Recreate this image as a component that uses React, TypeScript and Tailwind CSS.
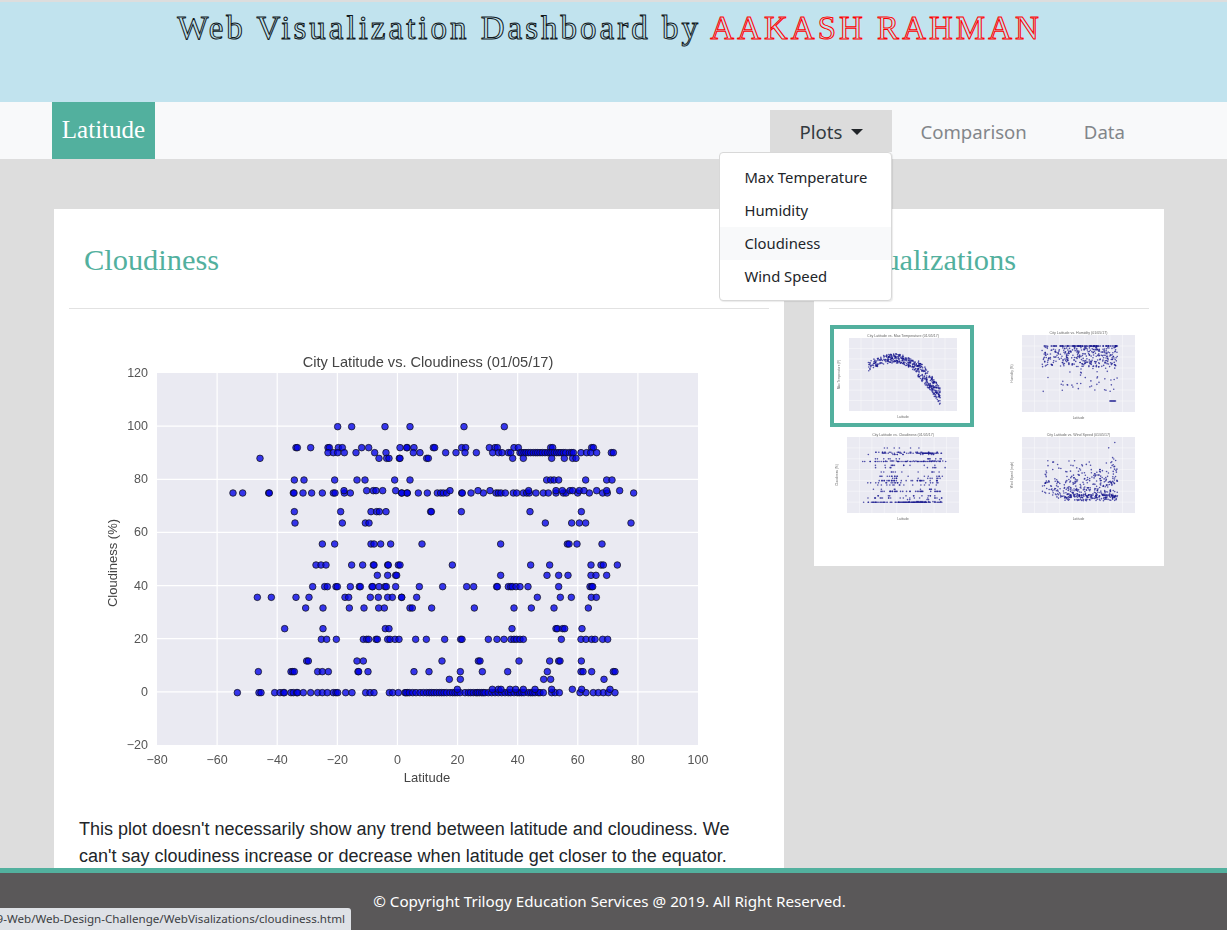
type Row = { y: number; a?: number[]; b?: number[] };

const topRows: Row[] = [
  { y: 245, a: [743, 785, 885, 960], b: [192, 313] },
  { y: 308, a: [618, 622, 662, 714, 718, 745, 757, 815, 836, 930, 952], b: [20, 42, 100, 104, 185, 197, 268, 285, 292, 342, 355, 452, 458, 575, 580] },
  { y: 323, a: [714, 730, 743, 763, 798, 854, 888], b: [40, 60, 137, 168, 195, 229, 278, 296, 306, 325, 332, 360, 365, 372, 378, 385, 392, 400, 407, 413, 420, 427, 435, 443, 450, 456, 463, 470, 477, 483, 490, 497, 508, 515, 520, 543, 560, 572, 590, 634, 640] },
  { y: 340, a: [510, 867, 890, 897, 928], b: [0, 80, 85, 338, 370, 455, 493, 518, 528] },
  { y: 405, a: [613, 642, 734, 801, 825, 914, 960], b: [440, 452, 462, 476, 557, 620, 636] },
  { y: 444, a: [429, 458, 536, 538, 610, 612, 639, 665, 697, 730, 735, 763, 781, 935, 951], b: [5, 22, 55, 82, 112, 122, 130, 140, 185, 187, 213, 250, 288, 295, 303, 316, 340, 350, 370, 380, 388, 408, 430, 445, 468, 490, 498, 533, 568, 608, 622, 701] },
  { y: 437, a: [762, 830, 850, 858, 878, 917], b: [150, 234, 270, 386, 468, 487, 510, 518, 538, 552, 590, 620, 659] },
  { y: 500, a: [613, 752, 843, 860, 868, 888], b: [92, 94, 184, 390, 544] },
  { y: 534, a: [615, 757, 826, 837], b: [436, 515, 538, 557, 693] },
  { y: 597, a: [697, 734, 843, 852, 872, 902], b: [66, 302, 502, 507, 531, 606] },
  { y: 660, a: [678, 693, 708, 785, 818, 850, 852, 893, 895, 925], b: [0, 157, 392, 449, 573, 603, 610, 652] },
];

const bottomRows: Row[] = [
  { y: 16, a: [862, 893, 917, 920], b: [302, 441, 476, 504, 573, 588, 620] },
  { y: 50, a: [668, 704, 712, 738, 742, 781, 808, 811, 846, 848, 867, 885, 889, 917], b: [58, 128, 200, 221, 290, 292, 325, 332, 337, 348, 360, 384, 476, 570, 575, 578] },
  { y: 82, a: [502, 544, 618, 657, 765, 776, 841, 865, 893, 907, 935], b: [5, 50, 412, 481, 514, 574, 589] },
  { y: 114, a: [647, 699, 778, 822, 866, 883, 960], b: [37, 95, 223, 342, 394, 462, 565] },
  { y: 176, a: [584, 699, 886, 897], b: [336, 468, 472, 488, 494, 546] },
  { y: 208, a: [694, 710, 739, 820, 830, 836, 858, 862, 893, 900, 915, 927], b: [47, 79, 134, 182, 186, 265, 291, 312, 333, 342, 350, 360, 370, 484, 543, 558, 575, 585, 608, 623] },
  { y: 273, a: [650, 655, 801, 820], b: [126, 235, 240, 357, 449, 476, 480, 544] },
  { y: 305, a: [505, 603, 608, 613, 683, 697, 715, 804, 806, 834], b: [42, 87, 181, 247, 323, 442, 543, 549, 575, 640, 645] },
  { y: 328, b: [148, 181, 431, 452, 612] },
  { y: 368, a: [442, 507, 513, 554, 570, 580, 583, 603, 610, 620, 623, 640, 662, 683, 697, 712, 730, 738, 743, 767, 786, 827, 840, 852, 898, 908, 925, 945, 952], b: [18, 28, 38, 48, 60, 70, 80, 88, 95, 102, 110, 118, 125, 132, 140, 150, 158, 165, 172, 180, 195, 205, 212, 220, 228, 232, 238, 245, 250, 255, 265, 275, 285, 295, 305, 315, 325, 332, 342, 352, 358, 365, 372, 385, 392, 398, 405, 415, 420, 430, 455, 465, 478, 540, 558, 580, 595, 610, 625, 645] },
  { y: 358, b: [172, 277, 295, 303, 330, 347, 370, 405, 455, 517, 545, 630] },
];

const points: [number, number][] = [];
topRows.forEach((r) => {
  (r.a ?? []).forEach((x) => points.push([90 + x / 3, 345 + r.y / 3]));
  (r.b ?? []).forEach((x) => points.push([400 + x / 3, 345 + r.y / 3]));
});
bottomRows.forEach((r) => {
  (r.a ?? []).forEach((x) => points.push([90 + x / 3, 570 + r.y / 3]));
  (r.b ?? []).forEach((x) => points.push([400 + x / 3, 570 + r.y / 3]));
});

function seeded(seed: number) {
  let s = seed;
  return () => {
    s = (s * 1664525 + 1013904223) % 4294967296;
    return s / 4294967296;
  };
}

type Box = { x: number; y: number; l: number; r: number; t: number; b: number; title: string; yl: string; ymin: number; ymax: number };

const boxes: Box[] = [
  { x: 830, y: 325, l: 849, r: 957, t: 338, b: 411, title: "City Latitude vs. Max Temperature (01/05/17)", yl: "Max Temperature (F)", ymin: -100, ymax: 150 },
  { x: 1006, y: 325, l: 1022, r: 1135, t: 335, b: 412, title: "City Latitude vs. Humidity (01/05/17)", yl: "Humidity (%)", ymin: -20, ymax: 120 },
  { x: 830, y: 429, l: 847, r: 959, t: 437, b: 513, title: "City Latitude vs. Cloudiness (01/05/17)", yl: "Cloudiness (%)", ymin: -20, ymax: 120 },
  { x: 1006, y: 429, l: 1022, r: 1135, t: 437, b: 513, title: "City Latitude vs. Wind Speed (01/05/17)", yl: "Wind Speed (mph)", ymin: -5, ymax: 40 },
];

function thumbData(i: number): [number, number][] {
  const rnd = seeded(17 + i * 31);
  const out: [number, number][] = [];
  if (i === 2) {
    return points.map(([x, y]) => [(x - 157) / 541, (y - 373) / 372]);
  }
  for (let n = 0; n < 470; n++) {
    const u = rnd();
    const lat = u < 0.14 ? -48 + rnd() * 30 : -20 + Math.pow(rnd(), 0.8) * 92;
    let v = 0;
    if (i === 0) {
      const base = lat < -5 ? 80 - Math.pow((lat + 5) / 50, 2) * 40 : 80 - Math.pow((lat + 5) / 75, 2) * 125;
      v = base + (rnd() - 0.5) * (lat > 35 ? 60 : 32);
    } else if (i === 1) {
      const k = rnd();
      v = k < 0.26 ? 100 : k < 0.82 ? 100 - rnd() * 38 : 100 - rnd() * 85;
    } else {
      const k = rnd();
      v = 2 + Math.pow(k, 3) * 20 + rnd() * 4 + (lat > 50 && rnd() > 0.82 ? rnd() * 14 : 0) + (lat < -25 ? rnd() * 8 : 0);
    }
    out.push([(lat + 80) / 180, 1 - (v - boxes[i].ymin) / (boxes[i].ymax - boxes[i].ymin)]);
  }
  if (i === 1) {
    for (let n = 0; n < 10; n++) out.push([(60 + n + 80) / 180, 1 - 20 / 140]);
  }
  return out;
}

function Thumb({ i, active }: { i: number; active?: boolean }) {
  const b = boxes[i];
  const w = b.r - b.l;
  const h = b.b - b.t;
  const data = thumbData(i);
  return (
    <div className={active ? "h-[102px] w-[144px] border-4 border-[#52b09e]" : "h-[102px] w-[144px] border-4 border-transparent"}>
      <svg viewBox={`${b.x + 4} ${b.y + 4} 136 94`} className="block h-[94px] w-[136px] blur-[0.5px]">
        <rect x={b.l} y={b.t} width={w} height={h} fill="#eaeaf2" />
        {[0.111, 0.222, 0.333, 0.444, 0.556, 0.667, 0.778, 0.889].map((f) => (
          <line key={f} x1={b.l + f * w} x2={b.l + f * w} y1={b.t} y2={b.b} stroke="#fff" strokeWidth={0.4} />
        ))}
        {[0.143, 0.286, 0.429, 0.571, 0.714, 0.857].map((f) => (
          <line key={f} x1={b.l} x2={b.r} y1={b.t + f * h} y2={b.t + f * h} stroke="#fff" strokeWidth={0.4} />
        ))}
        {data.map(([x, y], k) => (
          <circle key={k} cx={b.l + x * w} cy={b.t + y * h} r={0.8} fill="#14148c" fillOpacity={0.72} />
        ))}
        <text x={(b.l + b.r) / 2} y={b.t - 1.5} textAnchor="middle" fontSize={3.6} fill="#666" fontFamily="'Liberation Sans', sans-serif">{b.title}</text>
        <text x={(b.l + b.r) / 2} y={b.b + 7} textAnchor="middle" fontSize={3.2} fill="#666" fontFamily="'Liberation Sans', sans-serif">Latitude</text>
        <text transform={`translate(${b.l - 9} ${(b.t + b.b) / 2}) rotate(-90)`} textAnchor="middle" fontSize={3.2} fill="#666" fontFamily="'Liberation Sans', sans-serif">{b.yl}</text>
      </svg>
    </div>
  );
}

function MainChart() {
  const L = 157, R = 698, T = 373, B = 745;
  const xTicks = [-80, -60, -40, -20, 0, 20, 40, 60, 80, 100];
  const yTicks = [120, 100, 80, 60, 40, 20, 0, -20];
  const fmt = (n: number) => (n < 0 ? `\u2212${-n}` : `${n}`);
  return (
    <svg viewBox="79 345 650 450" className="ml-[10px] mt-[36px] block h-[450px] w-[650px] blur-[0.3px]" fontFamily="'Liberation Sans', Arial, sans-serif">
      <rect x={L} y={T} width={R - L} height={B - T} fill="#eaeaf2" />
      {xTicks.map((t) => {
        const x = L + ((t + 80) / 180) * (R - L);
        return (
          <g key={t}>
            {t > -80 && t < 100 && <line x1={x} x2={x} y1={T} y2={B} stroke="#fff" strokeWidth={1.2} />}
            <text x={x} y={764} textAnchor="middle" fontSize={12.5} fill="#555">{fmt(t)}</text>
          </g>
        );
      })}
      {yTicks.map((t) => {
        const y = B - ((t + 20) / 140) * (B - T);
        return (
          <g key={t}>
            {t > -20 && t < 120 && <line x1={L} x2={R} y1={y} y2={y} stroke="#fff" strokeWidth={1.2} />}
            <text x={148} y={y + 4} textAnchor="end" fontSize={12.5} fill="#555">{fmt(t)}</text>
          </g>
        );
      })}
      <text x={428} y={367} textAnchor="middle" fontSize={14.6} fill="#444">City Latitude vs. Cloudiness (01/05/17)</text>
      <text x={427} y={782} textAnchor="middle" fontSize={13} fill="#444">Latitude</text>
      <text transform="translate(117 563) rotate(-90)" textAnchor="middle" fontSize={13} fill="#444">Cloudiness (%)</text>
      {points.map(([x, y], i) => (
        <circle key={i} cx={x} cy={y} r={3.3} fill="#0000e8" fillOpacity={0.78} stroke="#111" strokeOpacity={0.8} strokeWidth={0.9} />
      ))}
    </svg>
  );
}

function NavBar() {
  return (
    <nav className="flex h-[57px] bg-[#f8f9fa] pl-[52px] pr-[102px] font-['Noto_Sans',sans-serif]">
      <a className="flex w-[103px] items-center justify-center bg-[#52b09e] pb-[1px] font-['Liberation_Serif',serif] text-[25px] text-white">Latitude</a>
      <div className="ml-auto flex items-start text-[18.6px]">
        <div className="relative mt-[8px]">
          <div className="flex h-[42px] w-[122px] items-center justify-center gap-[9px] bg-[#dcdcdc] pt-[2px] text-[#333a40]">
            <span>Plots</span>
            <span className="h-0 w-0 border-x-[6px] border-t-[6px] border-x-transparent border-t-[#212529]" />
          </div>
          <div className="absolute right-0 top-[42px] z-10 h-[149px] w-[173px] rounded-[4px] border border-[#d8d8d8] bg-white py-2 text-[14.8px] text-[#212529] shadow-[1px_1px_1px_rgba(0,0,0,0.08)]">
            <div className="flex h-[33px] items-center pl-[24px]">Max Temperature</div>
            <div className="flex h-[33px] items-center pl-[24px]">Humidity</div>
            <div className="flex h-[33px] items-center bg-[#f8f9fa] pl-[24px]">Cloudiness</div>
            <div className="flex h-[33px] items-center pl-[24px]">Wind Speed</div>
          </div>
        </div>
        <div className="mt-[8px] flex h-[42px] items-center pl-[28px] pt-[2px] text-[#82868a]">Comparison</div>
        <div className="mt-[8px] flex h-[42px] items-center pl-[57px] pt-[2px] text-[#82868a]">Data</div>
      </div>
    </nav>
  );
}

export default function App() {
  return (
    <div className="h-[930px] overflow-hidden bg-[#dddddd] pt-[2px]">
      <header className="h-[100px] bg-[#c1e3ee]">
        <h1 className="pr-[8px] pt-[6px] text-center font-['Liberation_Serif',serif] text-[33px] leading-[40px] tracking-[3px] text-[#c1e3ee] [-webkit-text-stroke:1px_#10181c]">
          Web Visualization Dashboard by <span className="[-webkit-text-stroke:1px_#ff0000]">AAKASH RAHMAN</span>
        </h1>
      </header>
      <NavBar />
      <main className="flex items-start gap-[30px] pl-[54px] pt-[50px]">
        <section className="w-[730px] bg-white px-[15px]">
          <h2 className="flex h-[99px] items-center pl-[15px] pt-[4px] font-['Liberation_Serif',serif] text-[30.4px] text-[#52b09e]">Cloudiness</h2>
          <div className="border-t border-[#e2e2e2]" />
          <MainChart />
          <p className="ml-[10px] mt-[21px] w-[660px] font-['Liberation_Sans',Arial,sans-serif] text-[18px] leading-[27px] text-[#212529]">
            This plot doesn't necessarily show any trend between latitude and cloudiness. We can't say cloudiness increase or decrease when latitude get closer to the equator.
          </p>
        </section>
        <aside className="h-[357px] w-[350px] bg-white px-[15px]">
          <h2 className="flex h-[99px] items-center pl-[15px] pt-[4px] font-['Liberation_Serif',serif] text-[30.4px] text-[#52b09e]">Visualizations</h2>
          <div className="border-t border-[#e2e2e2]" />
          <div className="ml-[1px] mt-[16px] grid w-[320px] grid-cols-[144px_144px] gap-x-[32px] gap-y-[2px]">
            <Thumb i={0} active />
            <Thumb i={1} />
            <Thumb i={2} />
            <Thumb i={3} />
          </div>
        </aside>
      </main>
      <footer className="fixed bottom-0 left-0 right-0 flex h-[62px] items-center justify-center border-t-[5px] border-[#52b09e] bg-[#5a5859] pr-[8px] font-['Noto_Sans',sans-serif] text-[15.2px] text-white">
        © Copyright Trilogy Education Services @ 2019. All Right Reserved.
      </footer>
      <div className="fixed bottom-0 left-0 flex h-[22px] w-[351px] items-center justify-end overflow-hidden whitespace-nowrap rounded-tr-[3px] bg-[#dee1e6] pr-[6px] font-['Noto_Sans',sans-serif] text-[11.6px] text-[#3c4043]">
        09-Web/Web-Design-Challenge/WebVisalizations/cloudiness.html
      </div>
    </div>
  );
}
